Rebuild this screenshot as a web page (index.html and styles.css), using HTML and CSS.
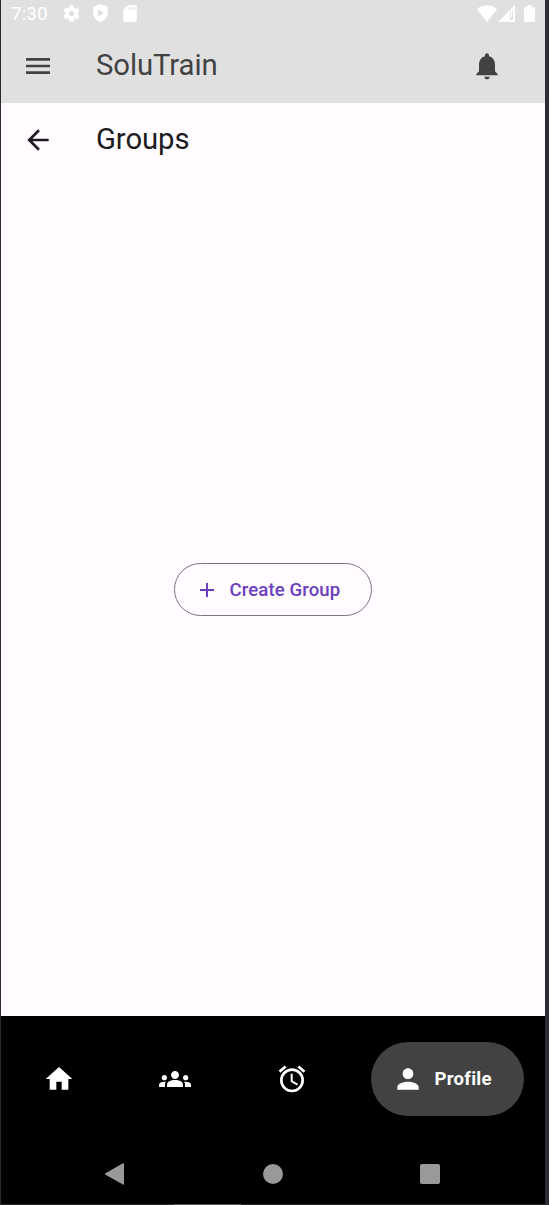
FILE: index.html
```html
<!DOCTYPE html>
<html lang="en">
<head>
<meta charset="utf-8">
<title>SoluTrain</title>
<link rel="stylesheet" href="styles.css">
</head>
<body>
<div class="device">
  <header class="top">
    <div class="status">
      <span class="clock">7:30</span>
      <svg class="gear" viewBox="2 2 20 20"><path d="M19.14 12.94c.04-.3.06-.61.06-.94 0-.32-.02-.64-.07-.94l2.03-1.58a.49.49 0 0 0 .12-.61l-1.92-3.32a.49.49 0 0 0-.59-.22l-2.39.96c-.5-.38-1.03-.7-1.62-.94l-.36-2.54a.48.48 0 0 0-.48-.41h-3.84c-.24 0-.43.17-.47.41l-.36 2.54c-.59.24-1.13.57-1.62.94l-2.39-.96c-.22-.08-.47 0-.59.22L2.74 8.87c-.12.21-.08.47.12.61l2.03 1.58c-.05.3-.09.63-.09.94s.02.64.07.94l-2.03 1.58a.49.49 0 0 0-.12.61l1.92 3.32c.12.22.37.29.59.22l2.39-.96c.5.38 1.03.7 1.62.94l.36 2.54c.05.24.24.41.48.41h3.84c.24 0 .44-.17.47-.41l.36-2.54c.59-.24 1.13-.56 1.62-.94l2.39.96c.22.08.47 0 .59-.22l1.92-3.32c.12-.22.07-.47-.12-.61l-2.01-1.58zM12 15A3 3 0 1 1 12 9a3 3 0 0 1 0 6z"/></svg>
      <svg class="shield" viewBox="3 1 18 22"><path fill-rule="evenodd" d="M12 1 3 4.500V11c0 5.550 3.840 10.740 9 12 5.160-1.260 9-6.450 9-12V4.500zM9 7.500l7.200 4.500L9 16.500z"/></svg>
      <svg class="sd" viewBox="4 2 16 20"><path fill-rule="evenodd" d="M18 2h-8L4 8v12c0 1.100.9 2 2 2h12c1.100 0 2-.9 2-2V4c0-1.100-.9-2-2-2zM10.300 5h1.300v3h-1.300zm2.900 0h1.300v3h-1.300zm2.900 0h1.300v3h-1.300z"/></svg>
      <svg class="wifi" viewBox="0 0 20 17"><path d="M10 17 0 4.200C2.500 1.800 6 .2 10 .2s7.500 1.600 10 4z"/></svg>
      <svg class="signal" viewBox="0 0 17 17"><path fill-rule="evenodd" d="M17 0v17H0zM12 7v8h3V5.500l-1 .5v7h-1V7z"/></svg>
      <svg class="battery" viewBox="0 0 11 17"><path d="M3.200 0h4.600v2H10q1 0 1 1v13q0 1-1 1H1q-1 0-1-1V3q0-1 1-1h2.200z"/></svg>
    </div>
    <div class="bar">
      <svg class="icon" viewBox="0 0 24 24"><path d="M3 18h18v-2H3zm0-5h18v-2H3zm0-7v2h18V6z"/></svg>
      <h1 class="title">SoluTrain</h1>
      <svg class="icon bell" viewBox="0 0 24 24"><path d="M12 22c1.100 0 2-.9 2-2h-4c0 1.100.89 2 2 2zm6-6v-5c0-3.070-1.640-5.640-4.500-6.320V4a1.500 1.500 0 0 0-3 0v.68C7.630 5.360 6 7.920 6 11v5l-2 2v1h16v-1z"/></svg>
    </div>
  </header>
  <div class="subbar">
    <svg class="icon" viewBox="0 0 24 24"><path d="M20 11H7.830l5.590-5.590L12 4l-8 8 8 8 1.410-1.410L7.830 13H20z"/></svg>
    <h2 class="title">Groups</h2>
  </div>
  <main class="content">
    <button class="create">
      <svg class="plus" viewBox="5 5 14 14"><path d="M19 13h-6v6h-2v-6H5v-2h6V5h2v6h6z"/></svg>
      <span>Create Group</span>
    </button>
  </main>
  <footer class="bottom">
    <nav class="tabs">
      <svg class="icon" viewBox="0 0 24 24"><path d="M10 20v-6h4v6h5v-8h3L12 3 2 12h3v8z"/></svg>
      <svg class="icon" viewBox="0 0 24 24"><path d="M12 12.750c1.630 0 3.070.39 4.240.9 1.080.48 1.760 1.560 1.760 2.730V18H6v-1.610c0-1.180.68-2.260 1.760-2.730 1.170-.52 2.610-.91 4.240-.91zM4 13c1.100 0 2-.9 2-2s-.9-2-2-2-2 .9-2 2 .9 2 2 2zm1.130 1.100c-.37-.06-.74-.1-1.130-.1-.99 0-1.930.21-2.780.58A2.010 2.010 0 0 0 0 16.430V18h4.500v-1.610c0-.83.23-1.610.63-2.290zM20 13c1.100 0 2-.9 2-2s-.9-2-2-2-2 .9-2 2 .9 2 2 2zm4 3.430c0-.81-.48-1.530-1.220-1.850A6.950 6.950 0 0 0 20 14c-.39 0-.76.04-1.130.1.4.68.63 1.460.63 2.290V18H24zM12 6c1.660 0 3 1.340 3 3s-1.340 3-3 3-3-1.340-3-3 1.340-3 3-3z"/></svg>
      <svg class="icon" viewBox="0 0 24 24"><path d="m22 5.720-4.600-3.860-1.290 1.530 4.600 3.860zM7.880 3.390 6.600 1.860 2 5.710l1.290 1.530zM12.500 8H11v6l4.750 2.850.75-1.230-4-2.370zM12 4a9 9 0 1 0 0 18 9 9 0 0 0 0-18zm0 16a7 7 0 1 1 0-14 7 7 0 0 1 0 14z"/></svg>
      <div class="profile">
        <svg class="icon" viewBox="0 0 24 24"><path d="M12 12c2.210 0 4-1.790 4-4s-1.790-4-4-4-4 1.790-4 4 1.790 4 4 4zm0 2c-2.670 0-8 1.340-8 4v2h16v-2c0-2.660-5.330-4-8-4z"/></svg>
        <span>Profile</span>
      </div>
    </nav>
    <div class="system">
      <svg class="back" viewBox="0 0 19 22"><path d="M18 .3q1-.5 1 .8v19.800q0 1.200-1 .7L.5 11.800q-1-.8 0-1.500z"/></svg>
      <span class="home"></span>
      <span class="recent"></span>
    </div>
    <div class="edge"><span class="handle"></span></div>
  </footer>
</div>
</body>
</html>
```

FILE: styles.css
```css
* { box-sizing: border-box; }

body {
  margin: 0;
  font-family: Roboto, "Liberation Sans", sans-serif;
}

svg { display: block; flex: none; fill: currentColor; }

.device {
  display: flex;
  flex-direction: column;
  width: 549px;
  height: 1205px;
  border-left: 1px solid #2b2a30;
  border-right: 4px solid #2c2c34;
  background: #fffbff;
}

.icon { width: 32px; height: 32px; }

.top {
  height: 103px;
  background: #e0e0e0;
  color: #424242;
}

.status {
  display: flex;
  align-items: center;
  height: 26px;
  padding: 0 10px;
  color: #fff;
}

.clock { width: 52px; font-size: 19px; line-height: 26px; padding-top: 2px; }
.gear { width: 17px; height: 17px; }
.shield { width: 15px; height: 18px; margin-left: 13px; }
.sd { width: 14px; height: 17px; margin-left: 15px; }
.wifi { width: 20px; height: 17px; margin-left: auto; }
.signal { width: 17px; height: 17px; margin-left: 1px; }
.battery { width: 11px; height: 17px; margin-left: 9px; }

.bar, .subbar {
  display: flex;
  align-items: center;
  padding-left: 21px;
}

.bar { height: 79px; padding-right: 42px; }
.subbar { height: 74px; color: #1c1b1f; }
.bell { margin-left: auto; }

.title {
  margin: 0 0 0 42px;
  padding-bottom: 1px;
  font-size: 29.3px;
  font-weight: 400;
  line-height: 37px;
  letter-spacing: -0.1px;
}

.content {
  flex: 1;
  display: flex;
  flex-direction: column;
  align-items: center;
  padding-top: 386px;
}

.create {
  display: flex;
  align-items: center;
  width: 198px;
  height: 53px;
  padding: 0 0 0 25px;
  border: 1.3px solid #79747e;
  border-radius: 27px;
  background: transparent;
  color: #6b3fbd;
  font: 500 18.6px Roboto, "Liberation Sans", sans-serif;
  letter-spacing: 0.1px;
}

.plus { width: 14px; height: 14px; margin-right: 15.5px; }

.bottom {
  height: 189px;
  background: #000;
  color: #fff;
}

.tabs {
  display: flex;
  align-items: center;
  height: 126px;
  padding: 0 21px 0 42px;
  gap: 84.400px;
}

.profile {
  display: flex;
  flex: none;
  align-items: center;
  gap: 10.5px;
  width: 153px;
  height: 74px;
  margin-left: -21.200px;
  padding-left: 21px;
  border-radius: 37px;
  background: #424242;
  font-size: 18.6px;
  font-weight: 700;
  letter-spacing: 0.25px;
}

.system {
  display: flex;
  align-items: center;
  height: 62px;
  padding: 2px 105px 0 104px;
  color: #999;
}

.back { width: 19px; height: 22px; }
.home { width: 20px; height: 20px; margin-left: 139px; border-radius: 50%; background: #999; }
.recent { width: 20px; height: 20px; margin-left: 137px; border-radius: 2px; background: #999; }

.edge { height: 1px; padding-left: 173px; background: #29292b; }
.handle { display: block; width: 67px; height: 1px; background: #555; }
```
